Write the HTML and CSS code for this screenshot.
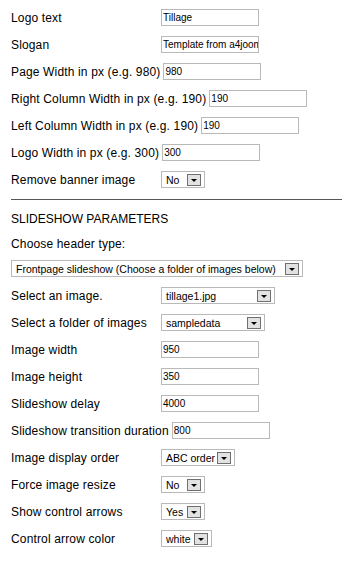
FILE: index.html
```html
<!DOCTYPE html>
<html>
<head>
<meta charset="utf-8">
<link rel="stylesheet" href="styles.css">
</head>
<body>
<div class="panel">
  <div class="row"><span class="lbl">Logo text</span><span class="inp">Tillage</span></div>
  <div class="row"><span class="lbl">Slogan</span><span class="inp">Template from a4joomla</span></div>
  <div class="row"><span class="lbl">Page Width in px (e.g. 980)</span><span class="inp">980</span></div>
  <div class="row"><span class="lbl">Right Column Width in px (e.g. 190)</span><span class="inp">190</span></div>
  <div class="row"><span class="lbl">Left Column Width in px (e.g. 190)</span><span class="inp">190</span></div>
  <div class="row"><span class="lbl">Logo Width in px (e.g. 300)</span><span class="inp">300</span></div>
  <div class="row"><span class="lbl">Remove banner image</span><span class="sel w44"><span class="val">No</span><span class="btn"></span></span></div>
  <div class="rule"></div>
  <div class="row"><span class="head">SLIDESHOW PARAMETERS</span></div>
  <div class="row short"><span class="lbl">Choose header type:</span></div>
  <div class="row"><span class="sel w292"><span class="val">Frontpage slideshow (Choose a folder of images below)</span><span class="btn"></span></span></div>
  <div class="row"><span class="lbl">Select an image.</span><span class="sel w114"><span class="val">tillage1.jpg</span><span class="btn"></span></span></div>
  <div class="row"><span class="lbl">Select a folder of images</span><span class="sel w104"><span class="val">sampledata</span><span class="btn"></span></span></div>
  <div class="row"><span class="lbl">Image width</span><span class="inp">950</span></div>
  <div class="row"><span class="lbl">Image height</span><span class="inp">350</span></div>
  <div class="row"><span class="lbl">Slideshow delay</span><span class="inp">4000</span></div>
  <div class="row"><span class="lbl">Slideshow transition duration</span><span class="inp">800</span></div>
  <div class="row"><span class="lbl">Image display order</span><span class="sel w74"><span class="val">ABC order</span><span class="btn"></span></span></div>
  <div class="row"><span class="lbl">Force image resize</span><span class="sel w44"><span class="val">No</span><span class="btn"></span></span></div>
  <div class="row"><span class="lbl">Show control arrows</span><span class="sel w44"><span class="val">Yes</span><span class="btn"></span></span></div>
  <div class="row"><span class="lbl">Control arrow color</span><span class="sel w51"><span class="val">white</span><span class="btn"></span></span></div>
</div>
</body>
</html>
```

FILE: styles.css
```css
html, body {
  margin: 0;
  padding: 0;
  background: #fff;
}
body {
  font-family: "Liberation Sans", Arial, sans-serif;
  color: #000;
  overflow: hidden;
}
.panel {
  padding: 4px 0 0 11px;
}
.row {
  display: flex;
  align-items: center;
  height: 27px;
}
.row.short {
  height: 23px;
}
.lbl {
  font-size: 12px;
  letter-spacing: 0.15px;
  min-width: 147px;
  padding-right: 3px;
  white-space: nowrap;
}
.head {
  font-size: 12px;
  white-space: nowrap;
}
.inp {
  box-sizing: border-box;
  width: 98px;
  height: 17px;
  border: 1px solid #b9b9b9;
  font-size: 10px;
  line-height: 15px;
  padding-left: 1px;
  overflow: hidden;
  white-space: nowrap;
}
.sel {
  box-sizing: border-box;
  height: 17px;
  border: 1px solid #b9b9b9;
  display: flex;
  align-items: center;
  font-size: 10.5px;
  padding: 0 3px 0 4px;
  white-space: nowrap;
}
.sel .val {
  flex: 1;
  overflow: hidden;
}
.sel .btn {
  box-sizing: border-box;
  flex: none;
  width: 14px;
  height: 12px;
  border: 1px solid #6f6f6f;
  background: #e2e2e2;
  display: flex;
  align-items: center;
  justify-content: center;
  margin-left: 1px;
}
.sel .btn::after {
  content: "";
  width: 0;
  height: 0;
  border-left: 3.5px solid transparent;
  border-right: 3.5px solid transparent;
  border-top: 3.5px solid #000;
  margin-top: 2px;
}
.w44 { width: 44px; }
.w51 { width: 51px; }
.w74 { width: 74px; }
.w104 { width: 104px; }
.w114 { width: 114px; }
.w292 { width: 292px; }
.rule {
  height: 1px;
  background: #555;
  margin-top: 6px;
  margin-bottom: 5px;
}
```
